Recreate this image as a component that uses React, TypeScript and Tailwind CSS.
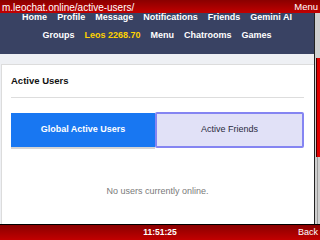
const navRow1 = ["Home", "Profile", "Message", "Notifications", "Friends", "Gemini AI"];

function SoftBar({ children, top }: { children: React.ReactNode; top?: boolean }) {
  return (
    <div
      className={
        top
          ? "flex h-[13px] shrink-0 items-center justify-between bg-gradient-to-b from-[#8a0000] to-[#c20000] pl-[2px] pr-[2px] text-white"
          : "flex h-[16px] shrink-0 items-center justify-between border-t border-black bg-gradient-to-b from-[#8a0000] to-[#c20000] pl-[2px] pr-[2px] text-white"
      }
    >
      {children}
    </div>
  );
}

export default function App() {
  return (
    <div className="flex h-[240px] w-[320px] flex-col overflow-hidden bg-white font-['Liberation_Sans',Arial,sans-serif]">
      <SoftBar top>
        <span className="pt-[1px] text-[10px] leading-[13px]">m.leochat.online/active-users/</span>
        <span className="text-[9.5px] leading-[13px]">Menu</span>
      </SoftBar>

      <div className="flex min-h-0 flex-1">
        <div className="flex min-w-0 flex-1 flex-col overflow-hidden bg-[#eef0f4]">
          <nav className="-mt-[5px] bg-[#394263] pb-[10px] text-[9px] font-bold leading-[18px] text-white">
            <div className="flex justify-center gap-x-[10px]">
              {navRow1.map((item) => (
                <span key={item}>{item}</span>
              ))}
            </div>
            <div className="flex justify-center gap-x-[10px]">
              <span>Groups</span>
              <span className="text-[#ffd200]">Leos 2268.70</span>
              <span>Menu</span>
              <span>Chatrooms</span>
              <span>Games</span>
            </div>
          </nav>

          <div className="flex flex-1 flex-col pl-[1px] pt-[10px]">
            <div className="flex-1 border-l border-t border-[#dcdcdc] bg-white pl-[9px] pr-[10px]">
              <div className="border-b border-[#dddddd] pb-[9px] pt-[9px] text-[9.5px] font-bold leading-[14px] text-[#111]">
                Active Users
              </div>

              <div className="mt-[14px] flex items-center">
                <div className="flex h-[34px] w-[144px] items-center justify-center bg-[#1877f2] text-[9px] font-bold text-white shadow-[0_2px_0_#d4d4d4]">
                  Global Active Users
                </div>
                <div className="flex h-[36px] flex-1 items-center justify-center rounded-[2px] border-2 border-[#8585f2] bg-[#e1e1f7] text-[9px] text-[#2a2a40]">
                  Active Friends
                </div>
              </div>

              <p className="mt-[36px] text-center text-[9px] leading-[14px] text-[#7a7a7a]">
                No users currently online.
              </p>
            </div>
          </div>
        </div>

        <div className="flex w-[6px] shrink-0 flex-col border-l border-[#222] bg-[#cfcfcf]">
          <div className="ml-[1px] mt-[45px] h-[99px] border-l border-[#400] bg-[#e00000]" />
          <div className="ml-[2px] flex-1 border-l border-[#9a9a9a]" />
        </div>
      </div>

      <SoftBar>
        <span className="w-[30px]" />
        <span className="text-[8.5px] font-bold leading-[15px]">11:51:25</span>
        <span className="w-[30px] text-right text-[9px] leading-[15px]">Back</span>
      </SoftBar>
    </div>
  );
}
